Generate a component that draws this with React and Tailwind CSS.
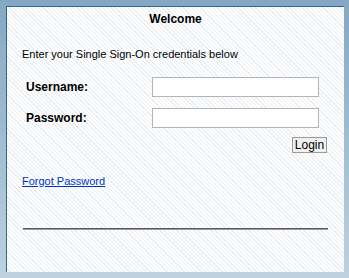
import React from 'react';

export default function App() {
    return (
        <div className="w-[349px] h-[278px] pt-[6px] pl-[6px] pr-[5px] pb-[6px] bg-gradient-to-b from-[#84a8c3] to-[#bcd2df] font-['Liberation_Sans',Arial,sans-serif]">
            <div className="h-full border-t border-l border-[#2c6891] bg-[repeating-linear-gradient(45deg,#ffffff_0px,#ffffff_2px,#e8eef2_2px,#e8eef2_3px)] text-black">
                <div className="pt-[4px] text-center text-[12px] font-bold leading-[16px]">Welcome</div>

                <div className="pl-[15px] mt-[20px] text-[11px] leading-[14px]">
                    Enter your Single Sign-On credentials below
                </div>

                <div className="mt-[16px] flex items-center h-[20px]">
                    <label className="w-[145px] pl-[19px] text-[12px] font-bold">Username:</label>
                    <input type="text" className="w-[167px] h-[20px] bg-white border border-[#b4b4b4] outline-none" />
                </div>
                <div className="mt-[11px] flex items-center h-[20px]">
                    <label className="w-[145px] pl-[19px] text-[12px] font-bold">Password:</label>
                    <input type="password" className="w-[167px] h-[20px] bg-white border border-[#b4b4b4] outline-none" />
                </div>

                <div className="mt-[9px] flex justify-end pr-[17px]">
                    <button className="h-[16px] w-[35px] bg-[#f0f0f0] border border-[#9a9a9a] text-[12px] leading-[14px] text-black">
                        Login
                    </button>
                </div>

                <div className="mt-[15px] pl-[15px]">
                    <a href="#" className="text-[11px] leading-[14px] text-[#0033cc] underline">Forgot Password</a>
                </div>

                <div className="mt-[36px] ml-[16px] w-[305px] h-[2px] bg-[#5a5a5a] border-b border-[#9a9a9a]" />
            </div>
        </div>
    );
}
